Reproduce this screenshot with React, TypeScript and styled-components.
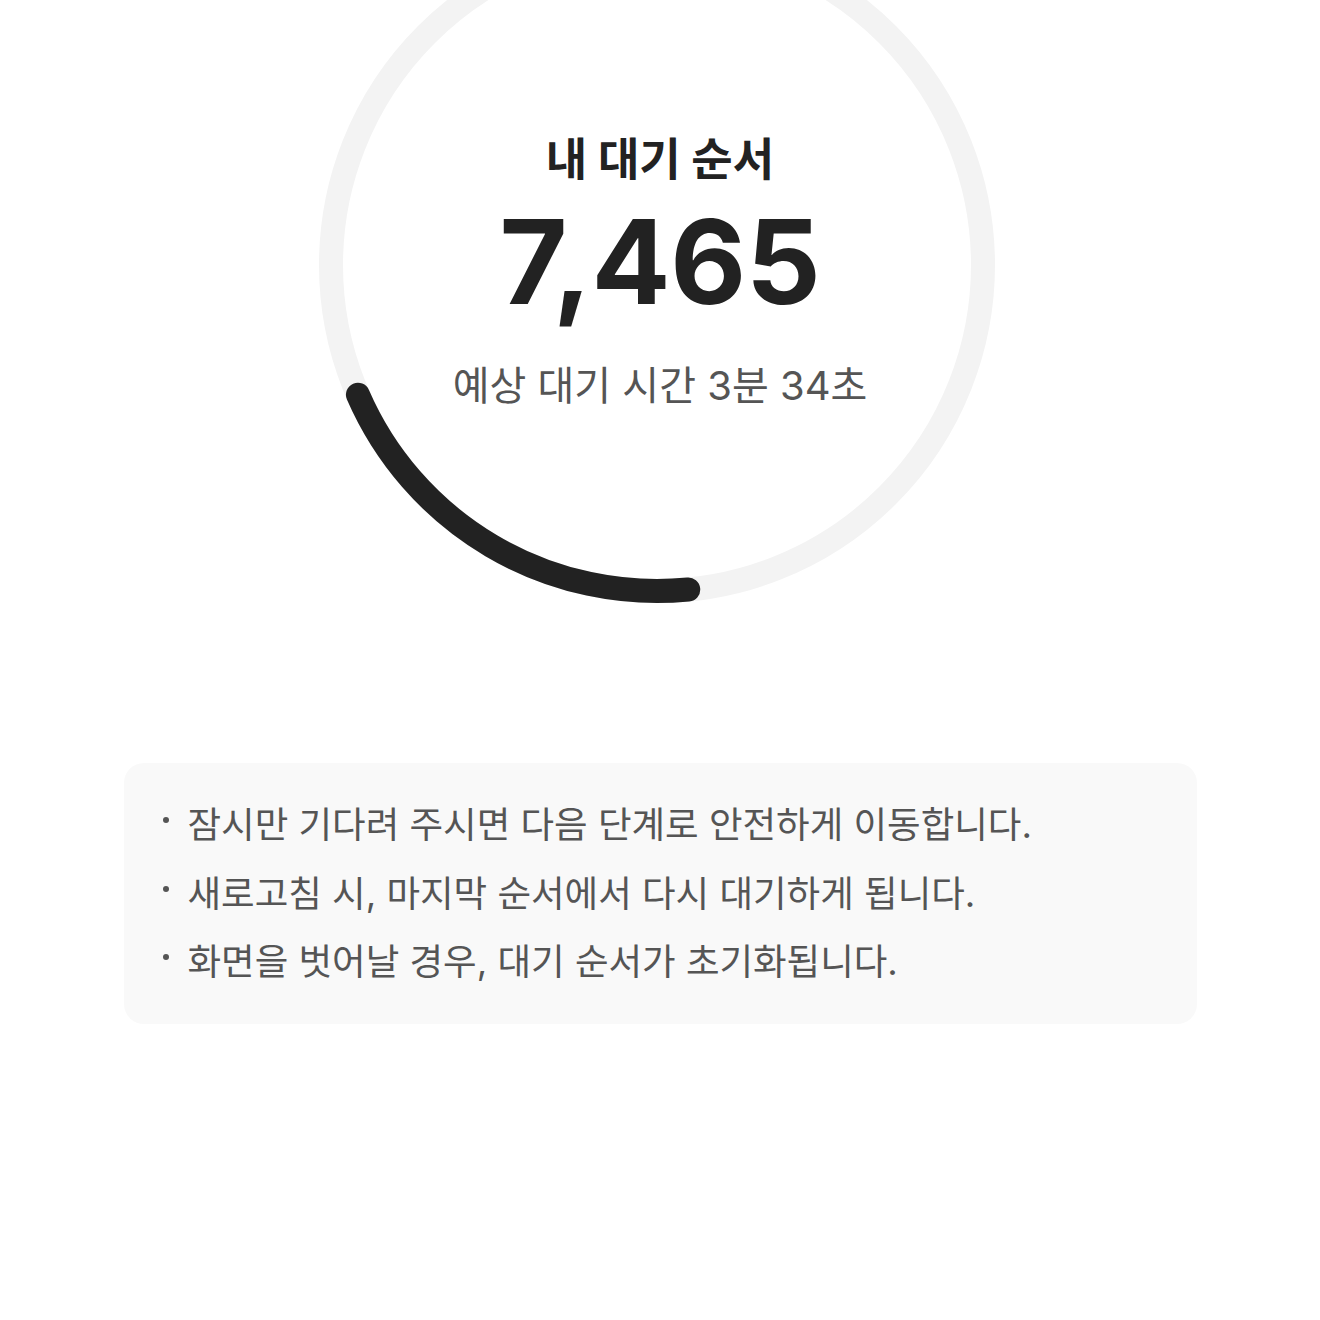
import React from "react";
import styled, { createGlobalStyle } from "styled-components";

const RING_SIZE = 680;
const RADIUS = 326;
const STROKE = 24;
const CIRCUMFERENCE = 2 * Math.PI * RADIUS;

const notices = [
  "잠시만 기다려 주시면 다음 단계로 안전하게 이동합니다.",
  "새로고침 시, 마지막 순서에서 다시 대기하게 됩니다.",
  "화면을 벗어날 경우, 대기 순서가 초기화됩니다.",
];

function ProgressRing({ progress }: { progress: number }) {
  const dash = CIRCUMFERENCE * progress;
  const c = RING_SIZE / 2;
  return (
    <RingSvg width={RING_SIZE} height={RING_SIZE} viewBox={`0 0 ${RING_SIZE} ${RING_SIZE}`}>
      <circle cx={c} cy={c} r={RADIUS} fill="none" stroke="#f3f3f3" strokeWidth={STROKE} />
      <circle
        cx={c}
        cy={c}
        r={RADIUS}
        fill="none"
        stroke="#222222"
        strokeWidth={STROKE}
        strokeLinecap="round"
        strokeDasharray={`${dash} ${CIRCUMFERENCE}`}
        transform={`rotate(84.5 ${c} ${c})`}
      />
    </RingSvg>
  );
}

function App() {
  return (
    <>
      <GlobalStyle />
      <Page>
        <RingArea>
          <ProgressRing progress={0.2} />
          <Counter>
            <CounterLabel>내 대기 순서</CounterLabel>
            <CounterValue>7,465</CounterValue>
            <CounterEta>예상 대기 시간 3분 34초</CounterEta>
          </Counter>
        </RingArea>
        <NoticeBox>
          {notices.map((text) => (
            <NoticeItem key={text}>{text}</NoticeItem>
          ))}
        </NoticeBox>
      </Page>
    </>
  );
}

export default App;

const GlobalStyle = createGlobalStyle`
  body {
    margin: 0;
    background: #ffffff;
    font-family: Inter, "Noto Sans CJK KR", sans-serif;
    color: #222222;
  }
`;

const Page = styled.main`
  width: 1320px;
  min-height: 1320px;
  overflow: hidden;
  display: flex;
  flex-direction: column;
  align-items: center;
`;

const RingArea = styled.section`
  display: grid;
  margin-top: -75px;
  margin-left: -6px;
  justify-items: center;
`;

const RingSvg = styled.svg`
  grid-area: 1 / 1;
  display: block;
`;

const Counter = styled.div`
  grid-area: 1 / 1;
  align-self: start;
  display: flex;
  flex-direction: column;
  align-items: center;
  margin: 208px 0 0 6px;
`;

const CounterLabel = styled.h2`
  margin: 0;
  font-size: 45px;
  font-weight: 700;
  line-height: 54px;
  color: #222222;
`;

const CounterValue = styled.div`
  margin-top: 11px;
  font-size: 117px;
  font-weight: 700;
  line-height: 1.1;
  letter-spacing: -0.3px;
  color: #222222;
`;

const CounterEta = styled.p`
  margin: 35px 0 0;
  font-size: 40px;
  font-weight: 400;
  line-height: 48px;
  color: #555555;
`;

const NoticeBox = styled.ul`
  box-sizing: border-box;
  width: 1073px;
  margin: 158px 0 0;
  padding: 28px 40px 27px;
  list-style: none;
  background: #f9f9f9;
  border-radius: 20px;
`;

const NoticeItem = styled.li`
  display: flex;
  align-items: center;
  font-size: 36.5px;
  line-height: 68.5px;
  color: #555555;

  &::before {
    content: "";
    flex: none;
    width: 6px;
    height: 6px;
    margin: -10px 19px 0 -1px;
    border-radius: 50%;
    background: #555555;
  }
`;
